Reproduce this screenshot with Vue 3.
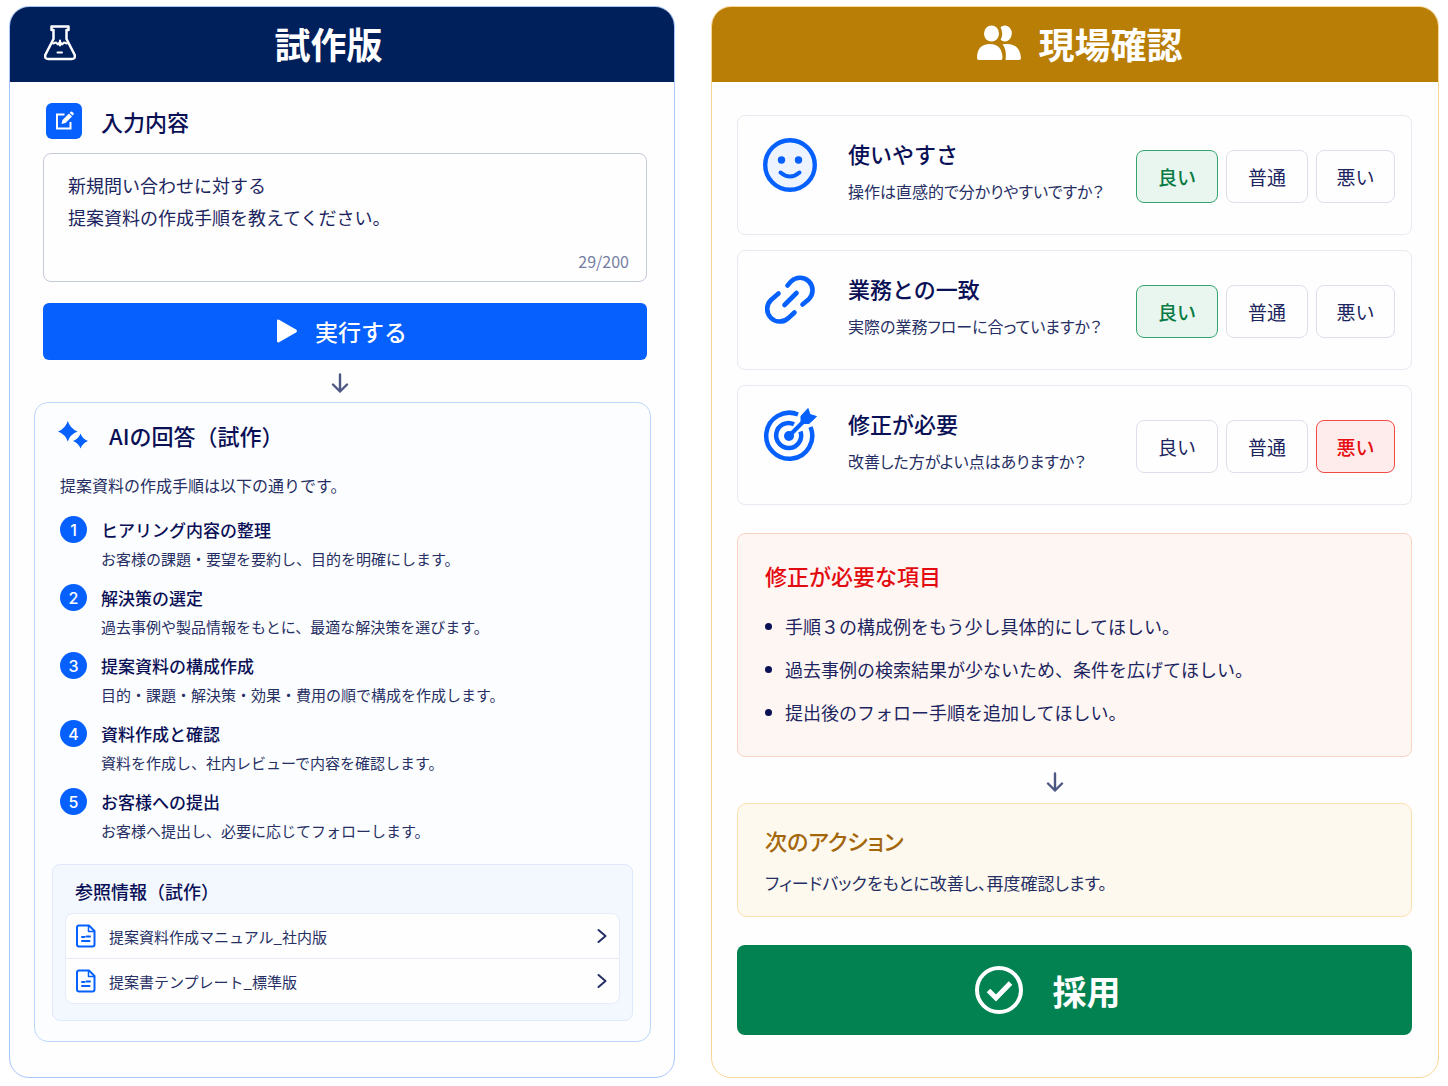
<script setup>
import { computed, ref } from 'vue'

const question = ref('新規問い合わせに対する\n提案資料の作成手順を教えてください。')
const questionLength = computed(() => question.value.replace(/\n/g, '').length)

const steps = [
  { title: 'ヒアリング内容の整理', detail: 'お客様の課題・要望を要約し、目的を明確にします。' },
  { title: '解決策の選定', detail: '過去事例や製品情報をもとに、最適な解決策を選びます。' },
  { title: '提案資料の構成作成', detail: '目的・課題・解決策・効果・費用の順で構成を作成します。' },
  { title: '資料作成と確認', detail: '資料を作成し、社内レビューで内容を確認します。' },
  { title: 'お客様への提出', detail: 'お客様へ提出し、必要に応じてフォローします。' }
]

const references = ['提案資料作成マニュアル_社内版', '提案書テンプレート_標準版']

const ratings = [
  { key: 'good', label: '良い' },
  { key: 'normal', label: '普通' },
  { key: 'bad', label: '悪い' }
]

const checks = ref([
  { icon: 'smile', title: '使いやすさ', question: '操作は直感的で分かりやすいですか？', value: 'good' },
  { icon: 'link', title: '業務との一致', question: '実際の業務フローに合っていますか？', value: 'good' },
  { icon: 'target', title: '修正が必要', question: '改善した方がよい点はありますか？', value: 'bad' }
])

const issues = [
  '手順３の構成例をもう少し具体的にしてほしい。',
  '過去事例の検索結果が少ないため、条件を広げてほしい。',
  '提出後のフォロー手順を追加してほしい。'
]
</script>

<template>
  <main class="board">
    <section class="panel panel-proto">
      <header class="panel-head head-proto">
        <svg viewBox="0 0 32 36" width="32" height="36" fill="none" stroke="currentColor" stroke-width="2.500" stroke-linecap="round" stroke-linejoin="round" aria-hidden="true">
          <path d="M7.500 1.500h17v3.500h-2v9l8 15.500q1.500 4.500-3 4.500h-23q-4.500 0-3-4.500l8-15.500v-9h-2z" />
          <path d="M9 18.500l3-1 2 2 2-3 2 3 2-2 3 1" stroke-width="2" />
          <path d="M16 15.500v5M13.500 27.500h4.500" stroke-width="2" />
        </svg>
        <h1>試作版</h1>
      </header>

      <div class="proto-body">
        <form class="ask" @submit.prevent>
          <div class="ask-title">
            <span class="edit-badge">
              <svg viewBox="0 0 20 20" width="20" height="20" fill="none" stroke="currentColor" stroke-width="2" aria-hidden="true">
                <path d="M10.500 3.500H3v14h13.500V11" />
                <path d="M7.500 13l1-4 6.500-6.500 3 3L11.500 12z" fill="currentColor" stroke="none" />
                <path d="M15.700 1.800l1-1q.800-.600 1.500 0l1.300 1.300q.600.800 0 1.500l-1 1z" fill="currentColor" stroke="none" />
              </svg>
            </span>
            <label class="title" for="question">入力内容</label>
          </div>
          <div class="ask-box">
            <textarea id="question" v-model="question" rows="2" maxlength="200"></textarea>
            <span class="counter">{{ questionLength }}/200</span>
          </div>
          <button class="run" type="submit">
            <svg viewBox="0 0 20 24" width="20" height="24" fill="currentColor" aria-hidden="true">
              <path d="M0 2Q0 0 2 .800L19 10.500Q21 12 19 13.500L2 23.200Q0 24 0 22z" />
            </svg>
            実行する
          </button>
        </form>

        <div class="down down-proto">
          <svg viewBox="0 0 18 20" width="18" height="20" fill="none" stroke="currentColor" stroke-width="2.400" stroke-linecap="round" stroke-linejoin="round" aria-hidden="true">
            <path d="M9 1.500v17M2 11.500L9 18.500l7-7" />
          </svg>
        </div>

        <article class="answer">
          <div class="answer-title">
            <svg viewBox="0 0 30 28" width="30" height="28" fill="currentColor" aria-hidden="true">
              <path d="M9.800 0Q12 7.500 19.500 10.500 12 13.500 9.800 20.500 7.500 13.500 0 10.500 7.500 7.500 9.800 0z" />
              <path d="M22.500 12.500Q24.500 18 30 20 24.500 22 22.500 27.500 20.500 22 15 20 20.500 18 22.500 12.500z" />
            </svg>
            <h2 class="title">AIの回答（試作）</h2>
          </div>
          <p class="lead">提案資料の作成手順は以下の通りです。</p>
          <ol class="steps">
            <li v-for="(step, index) in steps" :key="step.title">
              <span class="num">{{ index + 1 }}</span>
              <div>
                <h3>{{ step.title }}</h3>
                <p>{{ step.detail }}</p>
              </div>
            </li>
          </ol>

          <section class="refs">
            <h3>参照情報（試作）</h3>
            <ul>
              <li v-for="name in references" :key="name">
                <a href="#">
                  <svg viewBox="0 0 20 24" width="20" height="24" fill="none" stroke="currentColor" stroke-width="2" stroke-linejoin="round" stroke-linecap="round" aria-hidden="true">
                    <path d="M3 1.500h10l5.500 5.500v13.500q0 2-2 2H3q-2 0-2-2v-17q0-2 2-2z" />
                    <path d="M12.500 2v5.500H18" stroke-width="1.500" />
                    <path d="M6 13h2.500M10.500 12.500h3.500M6 17h7.500" />
                  </svg>
                  <span>{{ name }}</span>
                  <svg class="chevron" viewBox="0 0 10 16" width="10" height="16" fill="none" stroke="currentColor" stroke-width="2" stroke-linecap="round" stroke-linejoin="round" aria-hidden="true">
                    <path d="M1.500 2L8.500 8l-7 6" />
                  </svg>
                </a>
              </li>
            </ul>
          </section>
        </article>
      </div>
    </section>

    <section class="panel panel-field">
      <header class="panel-head head-field">
        <svg viewBox="0 0 46 36" width="46" height="36" fill="currentColor" aria-hidden="true">
          <ellipse cx="15.500" cy="8.500" rx="7.500" ry="8" />
          <path d="M24.500 2.200a7 8 0 1 1 0 12.600q3.500-6.300 0-12.600z" />
          <path d="M1 33Q1 19 14 19q12 0 12.500 14 0 2-2 2H3q-2 0-2-2z" />
          <path d="M26.500 19.300Q44 17 45 33q0 2-2 2H29.500q1.500-10-3-15.700z" />
        </svg>
        <h1>現場確認</h1>
      </header>

      <div class="field-body">
        <div class="checks">
          <article v-for="check in checks" :key="check.title" class="check">
            <svg v-if="check.icon === 'smile'" class="check-icon" viewBox="0 0 54 54" width="54" height="54" fill="none" stroke="currentColor" stroke-width="4.400" stroke-linecap="round" aria-hidden="true">
              <circle cx="27" cy="27" r="24.800" fill="#eef4ff" />
              <circle cx="18.500" cy="22" r="3.700" fill="currentColor" stroke="none" />
              <circle cx="35.500" cy="22" r="3.700" fill="currentColor" stroke="none" />
              <path d="M17.500 34.500Q27 42.500 36.500 34.500" stroke-width="4" />
            </svg>
            <svg v-else-if="check.icon === 'link'" class="check-icon" viewBox="0 0 54 54" width="54" height="54" fill="none" stroke="currentColor" stroke-width="4.600" stroke-linecap="round" aria-hidden="true">
              <path d="M24.500 12.500L28 8.500A12.500 12.500 0 0 1 46 26L39.500 31.500" />
              <path d="M15.500 20.500L8 27A12.500 12.500 0 0 0 25.500 45L31.500 39.500" />
              <path d="M21.500 32L33.500 20" />
            </svg>
            <svg v-else class="check-icon" viewBox="0 0 54 54" width="54" height="54" fill="none" stroke="currentColor" stroke-width="4.500" aria-hidden="true">
              <path d="M35 6.500A23 23 0 1 0 47.500 19" />
              <path d="M31 16.200A12.500 12.500 0 1 0 37.500 23.500" />
              <circle cx="26" cy="28" r="5" fill="currentColor" stroke="none" />
              <path d="M26 28L43 11" stroke-width="4" />
              <path d="M38 15V8l7-7.500 2 6 6.500 2L46 15.500h-7z" fill="currentColor" stroke="currentColor" stroke-width="1" stroke-linejoin="round" />
            </svg>
            <div class="check-text">
              <h2 class="title">{{ check.title }}</h2>
              <p>{{ check.question }}</p>
            </div>
            <div class="ratings" role="group" :aria-label="check.title">
              <button
                v-for="rating in ratings"
                :key="rating.key"
                type="button"
                class="rating"
                :class="{ [`on-${rating.key}`]: check.value === rating.key }"
                :aria-pressed="check.value === rating.key"
                @click="check.value = rating.key"
              >{{ rating.label }}</button>
            </div>
          </article>
        </div>

        <section class="issues">
          <h2 class="title">修正が必要な項目</h2>
          <ul>
            <li v-for="issue in issues" :key="issue">{{ issue }}</li>
          </ul>
        </section>

        <div class="down down-field">
          <svg viewBox="0 0 18 20" width="18" height="20" fill="none" stroke="currentColor" stroke-width="2.400" stroke-linecap="round" stroke-linejoin="round" aria-hidden="true">
            <path d="M9 1.500v17M2 11.500L9 18.500l7-7" />
          </svg>
        </div>

        <section class="next">
          <h2 class="title">次のアクション</h2>
          <p>フィードバックをもとに改善し、再度確認します。</p>
        </section>

        <button class="adopt" type="button">
          <svg viewBox="0 0 48 48" width="48" height="48" fill="none" stroke="currentColor" stroke-width="4" aria-hidden="true">
            <circle cx="24" cy="24" r="22" />
            <path d="M13.500 24.500l7.500 7.500L35.500 17" stroke-width="5" />
          </svg>
          採用
        </button>
      </div>
    </section>
  </main>
</template>

<style>
body {
  background: #fff;
}
</style>

<style scoped>
* {
  box-sizing: border-box;
}

.board {
  display: grid;
  grid-template-columns: 666fr 728fr;
  gap: 36px;
  padding: 6px 9px 8px;
  font-family: "Noto Sans CJK JP", "Noto Sans", sans-serif;
  font-size: 15px;
  color: #262f63;
}

h1, h2, h3, p, ul, ol {
  margin: 0;
  padding: 0;
}

ul, ol {
  list-style: none;
}

button, textarea {
  font: inherit;
}

button {
  cursor: pointer;
}

svg {
  display: block;
  flex: none;
}

.title {
  font-size: 22px;
  line-height: 32px;
  font-weight: 500;
  color: #0a1056;
}

.panel {
  border: 1px solid;
  border-radius: 20px;
  overflow: hidden;
  background: #fefefe;
}

.panel-proto {
  border-color: #a6c6fb;
}

.panel-field {
  border-color: #fad597;
}

.panel-head {
  display: flex;
  align-items: center;
  height: 76px;
  margin: -1px -1px 0;
  padding-bottom: 2px;
  color: #fff;
}

.panel-head h1 {
  font-size: 36px;
  line-height: 52px;
  font-weight: 700;
}

.head-proto {
  padding-left: 35px;
  padding-right: 94px;
  background: #00205c;
}

.head-proto h1 {
  flex: 1;
  text-align: center;
}

.head-field {
  justify-content: center;
  gap: 16px;
  padding-left: 9px;
  background: #b97e06;
}

.proto-body {
  padding: 21px 23px 35px 24px;
}

.ask {
  padding: 0 4px 0 9px;
}

.ask-title {
  display: flex;
  align-items: center;
  gap: 19px;
  padding-left: 3px;
  margin-bottom: 14px;
}

.edit-badge {
  display: flex;
  align-items: center;
  justify-content: center;
  width: 36px;
  height: 36px;
  border-radius: 6px;
  background: #0560fd;
  color: #fff;
}

.ask-box {
  display: flex;
  flex-direction: column;
  padding: 15px 17px 6px 24px;
  border: 1px solid #c5c9dc;
  border-radius: 8px;
}

.ask-box textarea {
  display: block;
  width: 100%;
  height: 78px;
  padding: 0;
  border: 0;
  outline: 0;
  resize: none;
  background: none;
  font-size: 18px;
  line-height: 32px;
  color: #1c2560;
}

.counter {
  align-self: flex-end;
  font-size: 16px;
  line-height: 28px;
  color: #767ea3;
}

.run {
  display: flex;
  align-items: center;
  justify-content: center;
  gap: 18px;
  width: 100%;
  height: 57px;
  margin-top: 21px;
  padding: 0 6px 2px 0;
  border: 0;
  border-radius: 6px;
  background: #0560fd;
  color: #fff;
  font-size: 23px;
  font-weight: 500;
}

.down {
  display: flex;
  align-items: center;
  justify-content: center;
  color: #4d5783;
}

.down-proto {
  height: 42px;
  padding: 4px 6px 0 0;
}

.answer {
  padding: 16px 17px 20px;
  border: 1px solid #bcd7fb;
  border-radius: 14px;
  background: #fcfdff;
}

.answer-title {
  display: flex;
  align-items: center;
  gap: 21px;
  padding-left: 6px;
  color: #0560fd;
}

.lead {
  margin: 20px 0 17px;
  padding-left: 8px;
  font-size: 16px;
  line-height: 28px;
}

.steps {
  display: grid;
  gap: 10px;
  padding-left: 8px;
}

.steps li {
  display: flex;
  gap: 14px;
}

.num {
  display: flex;
  align-items: center;
  justify-content: center;
  width: 27px;
  height: 27px;
  border-radius: 50%;
  background: #0560fd;
  color: #fff;
  font-family: Inter, sans-serif;
  font-size: 16px;
  font-weight: 500;
}

.steps h3 {
  font-size: 17px;
  line-height: 28px;
  font-weight: 500;
  color: #0a1056;
}

.steps p {
  line-height: 30px;
}

.refs {
  margin-top: 18px;
  padding: 12px;
  padding-bottom: 16px;
  border: 1px solid #dfe9fb;
  border-radius: 8px;
  background: #f3f7fe;
}

.refs h3 {
  padding-left: 10px;
  margin-bottom: 8px;
  font-size: 18px;
  line-height: 28px;
  font-weight: 500;
  color: #0a1056;
}

.refs ul {
  border: 1px solid #e6ebf7;
  border-radius: 8px;
  background: #fefefe;
}

.refs li + li {
  border-top: 1px solid #e6ebf7;
}

.refs a {
  display: flex;
  align-items: center;
  gap: 13px;
  height: 44px;
  padding: 0 12px 0 10px;
  color: #0560fd;
  text-decoration: none;
}

.refs a span {
  flex: 1;
  color: #262f63;
}

.refs .chevron {
  color: #262f63;
}

.field-body {
  padding: 33px 26px 42px 25px;
}

.checks {
  display: grid;
  gap: 15px;
}

.check {
  display: flex;
  align-items: flex-start;
  min-height: 120px;
  padding: 22px 16px 22px 25px;
  border: 1px solid #e8e9f1;
  border-radius: 8px;
}

.check-icon {
  color: #0560fd;
}

.check-text {
  flex: 1;
  padding-left: 31px;
}

.check-text .title {
  line-height: 30px;
}

.check-text p {
  margin-top: 11px;
  font-size: 16px;
  line-height: 24px;
  font-feature-settings: "palt";
}

.ratings {
  display: flex;
  gap: 8px;
  padding-top: 12px;
}

.rating {
  width: 82px;
  height: 53px;
  padding: 0;
  border: 1px solid #dddfeb;
  border-radius: 8px;
  background: #fefefe;
  color: #1c2560;
  font-size: 19px;
}

.rating:last-child {
  width: 79px;
}

.rating.on-good {
  border-color: #35a36f;
  background: #e9f6ef;
  color: #087a43;
  font-weight: 500;
}

.rating.on-bad {
  border-color: #f24b45;
  background: #feecec;
  color: #e60f12;
  font-weight: 500;
}

.issues {
  margin-top: 28px;
  padding: 25px 28px 22px 27px;
  border: 1px solid #fbd3c4;
  border-radius: 8px;
  background: #fef6f3;
}

.issues .title {
  color: #e30b10;
}

.issues ul {
  margin-top: 14px;
}

.issues li {
  display: flex;
  align-items: center;
  gap: 13px;
  font-size: 18px;
  line-height: 43px;
  color: #1c2560;
}

.issues li::before {
  content: "";
  width: 7px;
  height: 7px;
  border-radius: 50%;
  background: #0a1056;
}

.down-field {
  height: 46px;
  padding: 4px 40px 0 0;
}

.next {
  padding: 20px 28px 18px 27px;
  border: 1px solid #fbdfae;
  border-radius: 10px;
  background: #fdf9ef;
}

.next .title,
.next p {
  font-feature-settings: "palt";
}

.next .title {
  color: #a4660a;
}

.next p {
  margin-top: 12px;
  font-size: 17px;
  line-height: 30px;
}

.adopt {
  display: flex;
  align-items: center;
  justify-content: center;
  gap: 30px;
  width: 100%;
  height: 90px;
  margin-top: 28px;
  padding: 0 54px 0 0;
  border: 0;
  border-radius: 8px;
  background: #028250;
  color: #fff;
  font-size: 34px;
  font-weight: 700;
}
</style>
